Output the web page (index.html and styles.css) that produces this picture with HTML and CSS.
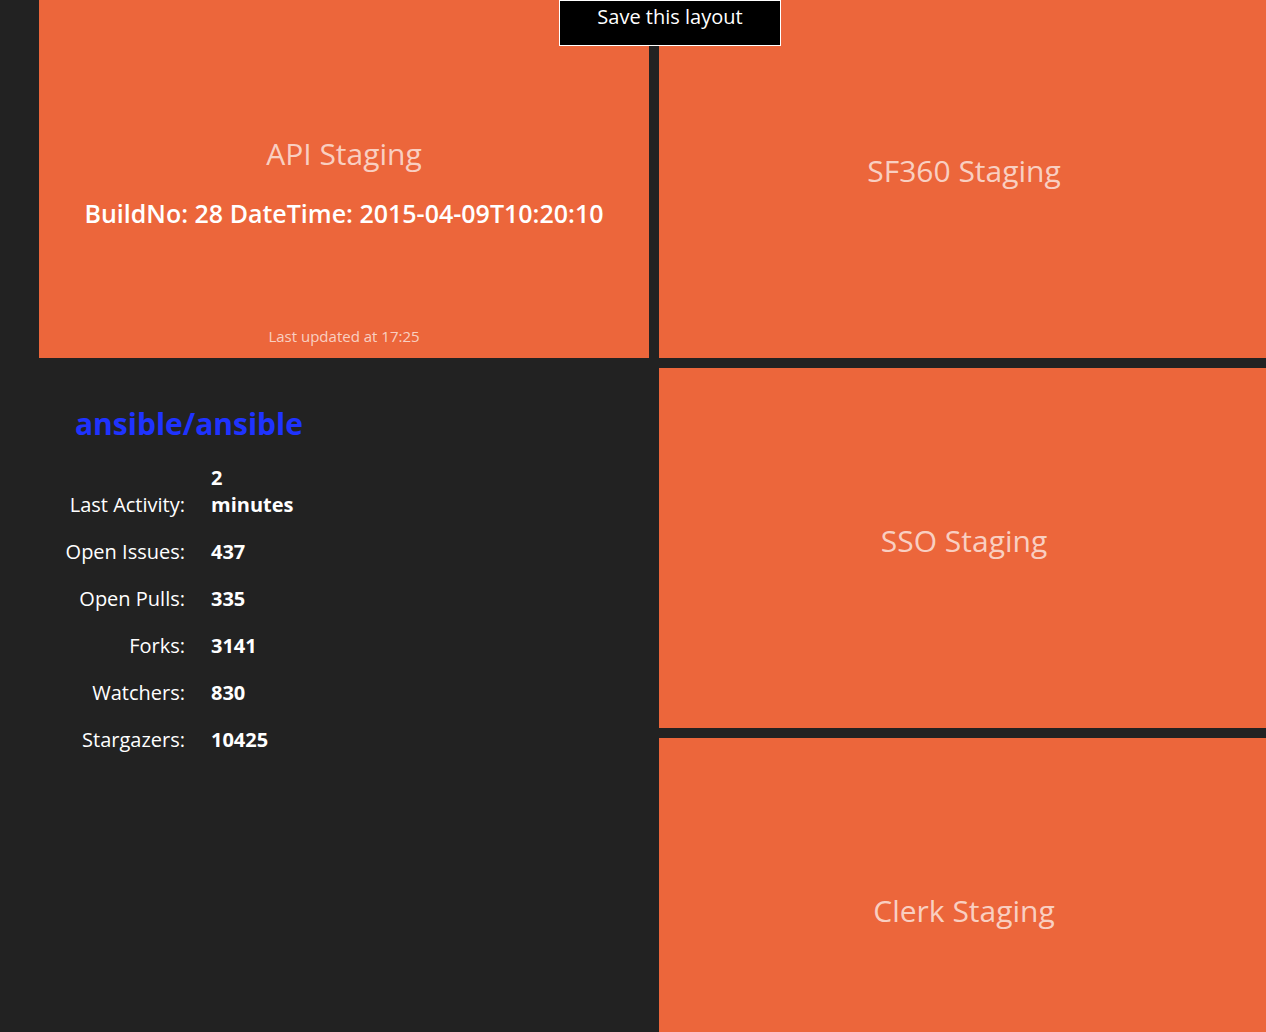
FILE: index.html
```html
<!DOCTYPE html>
<html>
<head>
<meta charset="utf-8">
<link rel="stylesheet" href="styles.css">
</head>
<body>
<div class="dashboard">
  <div class="column">
    <div class="tile tile-top">
      <div class="tile-body tile-body-detail">
        <h1 class="tile-title">API Staging</h1>
        <h3 class="tile-text">BuildNo: 28 DateTime: 2015-04-09T10:20:10</h3>
      </div>
      <p class="updated-at">Last updated at 17:25</p>
    </div>
    <div class="github">
      <h2 class="repo">ansible/ansible</h2>
      <div class="stats">
        <div class="label">Last Activity:</div><div class="value">2 minutes</div>
        <div class="label">Open Issues:</div><div class="value">437</div>
        <div class="label">Open Pulls:</div><div class="value">335</div>
        <div class="label">Forks:</div><div class="value">3141</div>
        <div class="label">Watchers:</div><div class="value">830</div>
        <div class="label">Stargazers:</div><div class="value">10425</div>
      </div>
    </div>
  </div>
  <div class="column">
    <div class="tile tile-top">
      <div class="tile-body"><h1 class="tile-title">SF360 Staging</h1></div>
    </div>
    <div class="tile">
      <div class="tile-body"><h1 class="tile-title">SSO Staging</h1></div>
    </div>
    <div class="tile">
      <div class="tile-body"><h1 class="tile-title">Clerk Staging</h1></div>
    </div>
  </div>
</div>
<button class="save-btn">Save this layout</button>
</body>
</html>
```
FILE: styles.css
```css
html, body {
  margin: 0;
  padding: 0;
  overflow: hidden;
  background: #222222;
  font-family: "Open Sans", "DejaVu Sans", sans-serif;
  color: #fff;
}
.dashboard {
  display: flex;
  gap: 10px;
  padding-left: 39px;
  margin-top: -2px;
  width: 1300px;
}
.column {
  display: flex;
  flex-direction: column;
  gap: 10px;
  width: 610px;
  flex: none;
}
.tile {
  background: #ec663b;
  height: 360px;
  display: grid;
  grid-template-areas: "cell";
  text-align: center;
}
.tile-body {
  grid-area: cell;
  align-self: center;
  padding: 0 12px;
}
.tile-body-detail {
  padding-top: 6px;
}
.tile-title {
  margin: 0 0 14px;
  font-size: 30px;
  font-weight: 400;
  line-height: 38px;
  color: rgba(255, 255, 255, 0.7);
}
.tile-text {
  margin: 25px 0 0;
  font-size: 25px;
  font-weight: 600;
  line-height: 30px;
  color: #fff;
}
.updated-at {
  grid-area: cell;
  align-self: end;
  margin: 0 0 12px;
  font-size: 15px;
  line-height: 20px;
  color: rgba(255, 255, 255, 0.7);
}
.github {
  padding: 36px 0 0 36px;
  height: 700px;
}
.repo {
  margin: 0 0 20px;
  font-size: 30px;
  font-weight: 700;
  line-height: 40px;
  color: #1f33ff;
}
.stats {
  display: grid;
  grid-template-columns: 146px 96px;
  column-gap: 26px;
  row-gap: 20px;
  align-items: end;
  margin-left: -36px;
  font-size: 20px;
  line-height: 27px;
}
.label {
  text-align: right;
}
.value {
  font-weight: 700;
}
.save-btn {
  position: absolute;
  left: 559px;
  top: 0;
  width: 222px;
  height: 46px;
  background: #000;
  border: 1px solid #fff;
  color: #fff;
  font-family: "Open Sans", "DejaVu Sans", sans-serif;
  font-size: 20px;
  line-height: 27px;
  padding: 0 0 14px;
}
```
